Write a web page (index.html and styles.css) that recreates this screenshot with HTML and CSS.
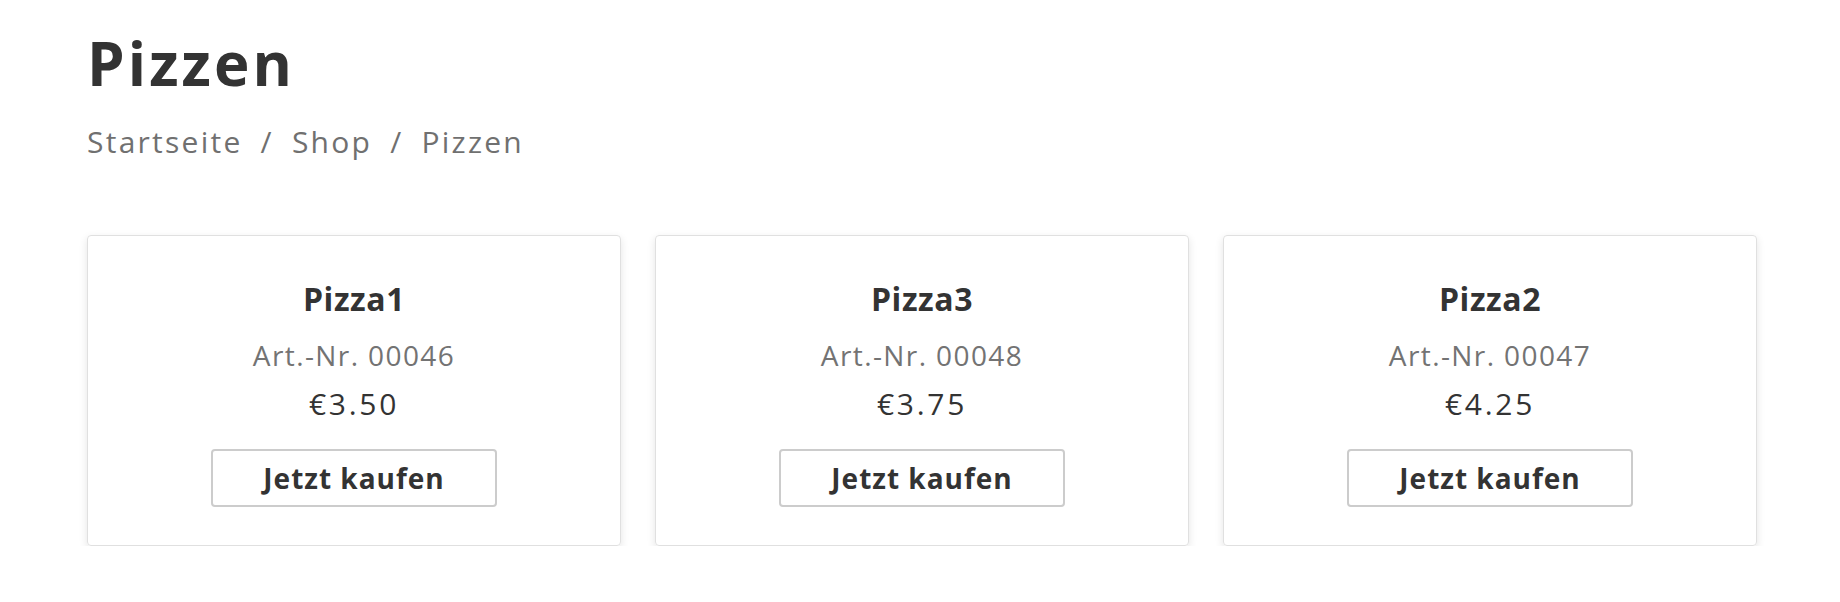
FILE: index.html
```html
<!DOCTYPE html>
<html lang="de">
<head>
    <meta charset="UTF-8">
    <meta name="viewport" content="width=device-width, initial-scale=1.0">
    <title>Pizzen</title>
    <link rel="stylesheet" href="styles.css">
</head>
<body>
    <div class="page">
        <h1 class="page-title">Pizzen</h1>
        <nav class="breadcrumb">
            <a href="#">Startseite</a>
            <span class="sep">/</span>
            <a href="#">Shop</a>
            <span class="sep">/</span>
            <span>Pizzen</span>
        </nav>

        <div class="products">
            <div class="product">
                <h2 class="product-name">Pizza1</h2>
                <div class="product-sku">Art.-Nr. 00046</div>
                <div class="product-price">€3.50</div>
                <button class="buy-btn">Jetzt kaufen</button>
            </div>
            <div class="product">
                <h2 class="product-name">Pizza3</h2>
                <div class="product-sku">Art.-Nr. 00048</div>
                <div class="product-price">€3.75</div>
                <button class="buy-btn">Jetzt kaufen</button>
            </div>
            <div class="product">
                <h2 class="product-name">Pizza2</h2>
                <div class="product-sku">Art.-Nr. 00047</div>
                <div class="product-price">€4.25</div>
                <button class="buy-btn">Jetzt kaufen</button>
            </div>
        </div>
    </div>
</body>
</html>
```

FILE: styles.css
```css
body {
    margin: 0;
    background: #fff;
    font-family: "Open Sans", "DejaVu Sans", sans-serif;
    color: #333;
    letter-spacing: 0.035em;
}
.page {
    padding: 27px 83px 0 87px;
}
.page-title {
    margin: 0;
    font-size: 60px;
    line-height: 72px;
    font-weight: 700;
    letter-spacing: 0.052em;
    color: #333;
}
.breadcrumb {
    margin-top: 23px;
    font-size: 30px;
    line-height: 40px;
    letter-spacing: 0.075em;
    color: #707070;
}
.breadcrumb a {
    color: #707070;
    text-decoration: none;
}
.breadcrumb .sep {
    padding: 0 8px;
}
.products {
    display: grid;
    grid-template-columns: repeat(3, 1fr);
    gap: 34px;
    margin-top: 73px;
}
.product {
    border: 1px solid #e0e0e0;
    border-radius: 4px;
    box-shadow: 0 3px 8px rgba(0, 0, 0, 0.11);
    padding: 43px 20px 38px;
    text-align: center;
}
.product-name {
    margin: 0;
    font-size: 32px;
    line-height: 40px;
    font-weight: 700;
}
.product-sku {
    margin-top: 18px;
    font-size: 28px;
    line-height: 36px;
    letter-spacing: 0.05em;
    color: #737373;
}
.product-price {
    margin-top: 13px;
    font-size: 30px;
    line-height: 36px;
    letter-spacing: 0.09em;
    color: #333;
}
.buy-btn {
    margin-top: 27px;
    height: 58px;
    padding: 0 50px;
    border: 2px solid #cccccc;
    border-radius: 4px;
    background: #fff;
    font-family: inherit;
    font-size: 28px;
    font-weight: 700;
    letter-spacing: 0.035em;
    color: #333;
    cursor: pointer;
}
.buy-btn:hover {
    background: #f5f5f5;
}
```
